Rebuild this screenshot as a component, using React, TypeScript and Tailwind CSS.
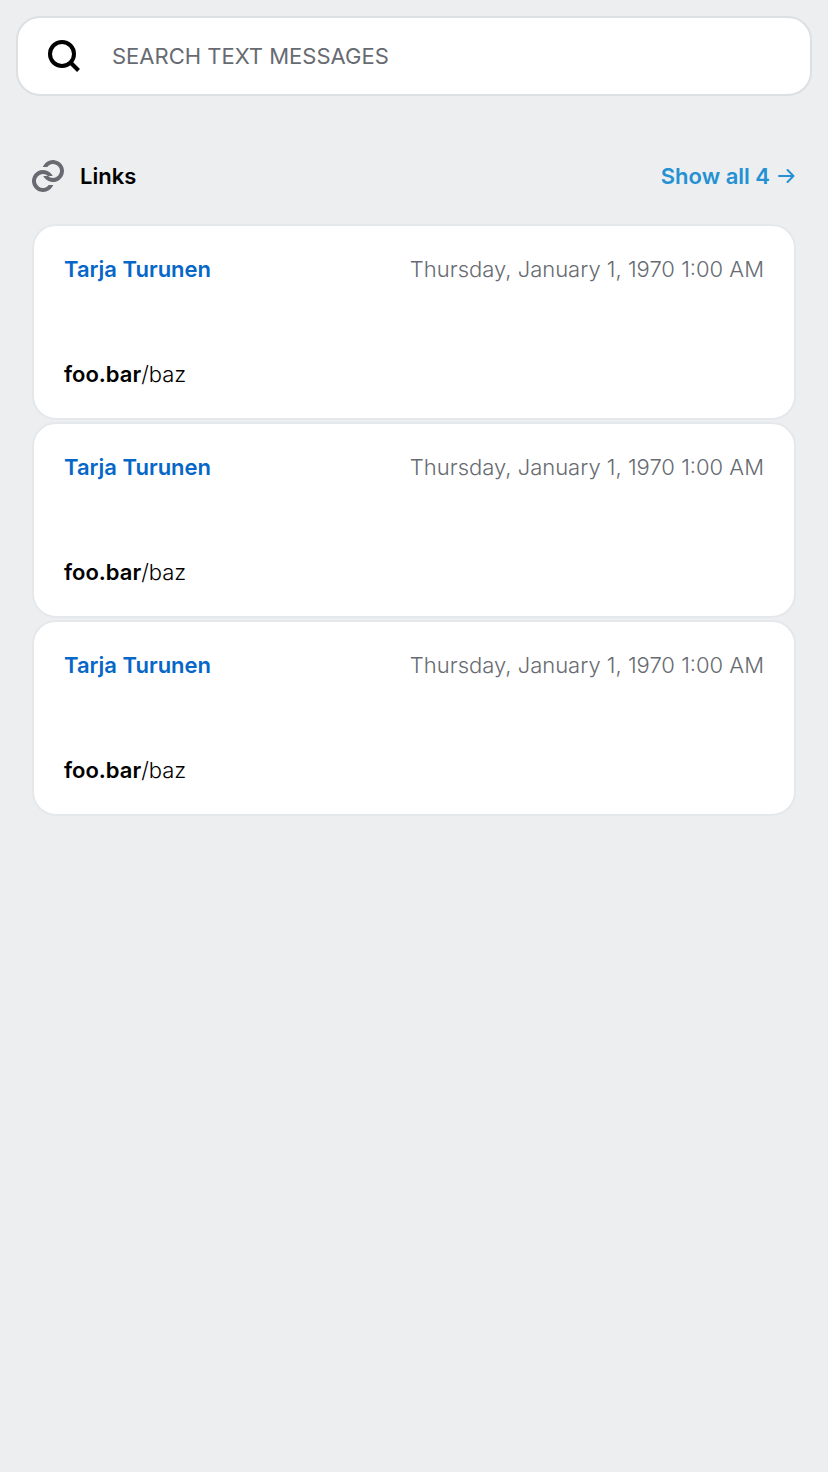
const messages = [1, 2, 3].map((id) => ({
  id,
  sender: "Tarja Turunen",
  date: "Thursday, January 1, 1970 1:00 AM",
  host: "foo.bar",
  path: "/baz",
}));

function SearchIcon() {
  return (
    <svg viewBox="0 0 32 32" className="size-8 shrink-0" fill="none" stroke="currentColor" strokeWidth="4" aria-hidden="true">
      <circle cx="14" cy="14" r="12" />
      <path d="M22.5 22.5L30.5 30.5" />
    </svg>
  );
}

function LinkIcon() {
  return (
    <svg viewBox="0 0 32 32" className="size-8 shrink-0 text-[#676b71]" fill="currentColor" aria-hidden="true">
      <path d="M10.75 7A11 11 0 1 1 11.2 16H16.1A7 7 0 1 0 15.26 7Z" />
      <path d="M21.25 25A11 11 0 1 1 20.8 16H15.9A7 7 0 1 0 16.74 25Z" />
    </svg>
  );
}

function MessageCard({ sender, date, host, path }: { sender: string; date: string; host: string; path: string }) {
  return (
    <li className="rounded-3xl border-2 border-[#e5e8ea] bg-white px-[30px] py-7">
      <div className="flex items-center justify-between gap-4 leading-[30px]">
        <span className="font-semibold text-[#0667c8]">{sender}</span>
        <time className="font-light text-[#676b71]">{date}</time>
      </div>
      <a href="#" className="mt-[74px] block leading-8 font-light text-black">
        <span className="font-semibold">{host}</span>
        {path}
      </a>
    </li>
  );
}

export default function App() {
  return (
    <main className="min-h-screen bg-[#edeef0] p-4 font-['Inter','Liberation_Sans',sans-serif] text-[22px]">
      <label className="flex h-20 items-center gap-8 rounded-3xl border-2 border-[#dce0e3] bg-white px-[30px] text-black">
        <SearchIcon />
        <input
          type="text"
          aria-label="Search text messages"
          placeholder="SEARCH TEXT MESSAGES"
          className="min-w-0 flex-1 bg-transparent outline-none placeholder:text-[#676b71]"
        />
      </label>
      <section className="px-4 pt-16">
        <header className="flex h-8 items-center justify-between">
          <h2 className="flex items-center gap-4 font-semibold text-black">
            <LinkIcon />
            Links
          </h2>
          <button type="button" className="flex items-center gap-2 font-semibold text-[#2391d3]">
            Show all 4
            <svg viewBox="0 0 18 16" className="h-4 w-[18px]" fill="none" stroke="currentColor" strokeWidth="2" strokeLinecap="round" strokeLinejoin="round" aria-hidden="true">
              <path d="M1 8H15.5M9.500 2L15.500 8L9.500 14" />
            </svg>
          </button>
        </header>
        <ul className="mt-8 flex flex-col gap-[2px]">
          {messages.map(({ id, ...message }) => (
            <MessageCard key={id} {...message} />
          ))}
        </ul>
      </section>
    </main>
  );
}
